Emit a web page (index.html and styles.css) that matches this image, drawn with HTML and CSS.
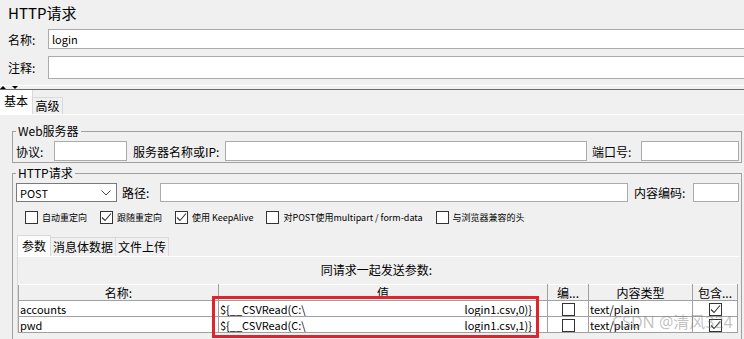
FILE: index.html
```html
<!DOCTYPE html>
<html lang="zh-CN">
  <head>
    <meta charset="UTF-8" />
    <title>HTTP请求</title>
    <link rel="stylesheet" href="styles.css">
  </head>
  <body>
    <div class="title">HTTP请求</div>

    <div class="field-row name-row">
      <label>名称:</label>
      <div class="input wide"><span class="latin">login</span></div>
    </div>
    <div class="field-row comment-row">
      <label>注释:</label>
      <div class="input wide"></div>
    </div>

    <div class="splitter">
      <span class="tri up"></span>
      <span class="tri down"></span>
    </div>

    <div class="tabs top-tabs">
      <div class="tab active">基本</div>
      <div class="tab">高级</div>
    </div>

    <div class="tab-body">
      <fieldset class="group web">
        <legend>Web服务器</legend>
        <div class="line">
          <label class="lbl-proto">协议:</label>
          <div class="input proto"></div>
          <label class="lbl-host">服务器名称或IP:</label>
          <div class="input grow"></div>
          <label class="lbl-port">端口号:</label>
          <div class="input port"></div>
        </div>
      </fieldset>

      <fieldset class="group http">
        <legend>HTTP请求</legend>
        <div class="line">
          <div class="select">
            <span class="latin">POST</span>
            <svg width="10" height="6" viewBox="0 0 10 6"><path d="M0.5 0.5 L5 5 L9.5 0.5" fill="none" stroke="#444" stroke-width="1"/></svg>
          </div>
          <label class="lbl-path">路径:</label>
          <div class="input grow"></div>
          <label class="lbl-enc">内容编码:</label>
          <div class="input enc"></div>
        </div>

        <div class="checks">
          <div class="check"><span class="box"></span>自动重定向</div>
          <div class="check"><span class="box on"><svg width="11" height="11" viewBox="0 0 11 11"><path d="M1 5.5 L4 8.5 L10 1.5" fill="none" stroke="#333" stroke-width="1.1"/></svg></span>跟随重定向</div>
          <div class="check"><span class="box on"><svg width="11" height="11" viewBox="0 0 11 11"><path d="M1 5.5 L4 8.5 L10 1.5" fill="none" stroke="#333" stroke-width="1.1"/></svg></span>使用 KeepAlive</div>
          <div class="check"><span class="box"></span>对POST使用multipart / form-data</div>
          <div class="check"><span class="box"></span>与浏览器兼容的头</div>
        </div>

        <div class="inner">
          <div class="tabs inner-tabs">
            <div class="tab active">参数</div>
            <div class="tab">消息体数据</div>
            <div class="tab">文件上传</div>
          </div>
          <div class="panel">
            <div class="caption">同请求一起发送参数:</div>
            <table class="params">
              <colgroup>
                <col class="c-name"><col class="c-value"><col class="c-enc"><col class="c-type"><col class="c-inc">
              </colgroup>
              <thead>
                <tr><th>名称:</th><th>值</th><th>编...</th><th>内容类型</th><th>包含...</th></tr>
              </thead>
              <tbody>
                <tr>
                  <td>accounts</td>
                  <td><div class="value"><span>${__CSVRead(C:\</span><span>login1.csv,0)}</span></div></td>
                  <td class="mid"><span class="box"></span></td>
                  <td>text/plain</td>
                  <td class="mid"><span class="box on"><svg width="11" height="11" viewBox="0 0 11 11"><path d="M1 5.5 L4 8.5 L10 1.5" fill="none" stroke="#333" stroke-width="1.1"/></svg></span></td>
                </tr>
                <tr>
                  <td>pwd</td>
                  <td><div class="value"><span>${__CSVRead(C:\</span><span>login1.csv,1)}</span></div></td>
                  <td class="mid"><span class="box"></span></td>
                  <td>text/plain</td>
                  <td class="mid"><span class="box on"><svg width="11" height="11" viewBox="0 0 11 11"><path d="M1 5.5 L4 8.5 L10 1.5" fill="none" stroke="#333" stroke-width="1.1"/></svg></span></td>
                </tr>
              </tbody>
            </table>
          </div>
        </div>
      </fieldset>
    </div>

    <!-- annotation overlays from the screenshot -->
    <div class="red-box"></div>
    <div class="watermark">CSDN @清风324</div>
  </body>
</html>
```

FILE: styles.css
```css
* {
  box-sizing: border-box;
}
html,
body {
  height: 100%;
}
body {
  margin: 0;
  background: #f0f0f0;
  color: #000;
  font-family: "Noto Sans CJK SC", "Noto Sans", sans-serif;
  font-size: 12px;
  overflow: hidden;
  position: relative;
}
.latin {
  font-size: 11px;
}
.title {
  height: 29px;
  line-height: 25px;
  padding-left: 8px;
  font-size: 15px;
}
.field-row {
  display: flex;
  align-items: center;
}
.field-row label {
  width: 48px;
  padding-left: 8px;
  flex-shrink: 0;
}
.name-row {
  height: 20px;
  margin-bottom: 7px;
}
.comment-row {
  height: 23px;
}
.input {
  background: #fff;
  border: 1px solid #ababab;
  height: 100%;
  line-height: 18px;
  padding-left: 3px;
}
.wide {
  flex: 1;
  margin-right: -4px;
}
.splitter {
  margin-top: 6px;
  height: 5px;
  border-top: 1px solid #fff;
  border-bottom: 1px solid #6a6a6a;
  display: flex;
  gap: 6px;
}
.tri {
  width: 0;
  height: 0;
  border-left: 3px solid transparent;
  border-right: 3px solid transparent;
}
.tri.up {
  border-bottom: 3px solid #000;
}
.tri.down {
  border-top: 3px solid #000;
}
.tabs {
  display: flex;
  align-items: flex-end;
}
.tab {
  border: 1px solid #d9d9d9;
  border-bottom: none;
  background: #f0f0f0;
  padding: 0;
  text-align: center;
  white-space: nowrap;
}
.tab.active {
  background: #fff;
}
.top-tabs {
  height: 24px;
}
.top-tabs .tab {
  width: 30px;
  height: 17px;
  line-height: 15px;
  border-left: none;
}
.top-tabs .tab.active {
  width: 33px;
  height: 24px;
  line-height: 22px;
  border: none;
  border-right: 1px solid #d9d9d9;
}
.tab-body {
  border-top: 1px solid #fff;
  padding-top: 9px;
}
.group {
  margin: 0 2px 0 12px;
  border: 1px solid #a0a0a0;
  padding: 0 2px 1px 3px;
  min-width: 0;
}
.group legend {
  padding: 0 2px;
  line-height: 14px;
}
.line {
  display: flex;
  align-items: center;
  height: 20px;
  margin-top: 3px;
}
.line .input {
  flex-shrink: 0;
}
.line label {
  flex-shrink: 0;
  white-space: nowrap;
}
.grow {
  flex: 1 !important;
}
.lbl-proto {
  width: 38px;
}
.proto {
  width: 73px;
}
.lbl-host {
  margin-left: 6px;
  width: 92px;
}
.lbl-port {
  margin-left: 5px;
  width: 49px;
}
.port {
  width: 98px;
}
.group.web {
  margin-bottom: 3px;
}
.group.http {
  height: 400px;
}
.http .line {
  height: 19px;
}
.select {
  width: 101px;
  height: 19px;
  background: #fff;
  border: 1px solid #7a7a7a;
  display: flex;
  align-items: center;
  justify-content: space-between;
  padding: 0 5px 0 3px;
  flex-shrink: 0;
}
.lbl-path {
  margin-left: 5px;
  width: 38px;
}
.lbl-enc {
  margin-left: 6px;
  width: 59px;
}
.enc {
  width: 46px;
}
.checks {
  display: flex;
  align-items: center;
  gap: 13px;
  margin: 9px 0 0 9px;
  height: 13px;
  font-size: 9px;
  white-space: nowrap;
}
.check {
  display: flex;
  align-items: center;
  gap: 4px;
}
.box {
  display: inline-flex;
  align-items: center;
  justify-content: center;
  width: 13px;
  height: 13px;
  background: #fff;
  border: 1px solid #333;
}
.inner {
  margin: 11px 0 0 1px;
}
.inner-tabs {
  height: 21px;
}
.inner-tabs .tab {
  height: 19px;
  line-height: 17px;
  border-left: none;
}
.inner-tabs .tab:first-child {
  border-left: 1px solid #d9d9d9;
}
.inner-tabs .tab.active {
  height: 21px;
  line-height: 19px;
  width: 34px;
  background: #fcfcfc;
}
.inner-tabs .tab:nth-child(2) {
  width: 65px;
}
.inner-tabs .tab:nth-child(3) {
  width: 53px;
}
.panel {
  border-left: 1px solid #d9d9d9;
  border-top: 1px solid #fff;
  padding-top: 5px;
}
.caption {
  text-align: center;
  line-height: 16px;
  margin-bottom: 6px;
  padding-right: 4px;
}
.params {
  border-collapse: collapse;
  table-layout: fixed;
  width: 719px;
}
.c-name {
  width: 200px;
}
.c-value {
  width: 329px;
}
.c-enc {
  width: 41px;
}
.c-type {
  width: 104px;
}
.c-inc {
  width: 45px;
}
.params th {
  font-weight: normal;
  height: 16px;
  line-height: 14px;
  padding: 0;
  background: #f0f0f0;
  border: 1px solid #a0a0a0;
  border-top-color: #fff;
  white-space: nowrap;
  overflow: hidden;
}
.params td {
  height: 16px;
  line-height: 14px;
  padding: 0 1px;
  font-size: 11px;
  background: #fff;
  border: 1px solid #a0a0a0;
  white-space: nowrap;
  overflow: hidden;
}
.params td.mid {
  text-align: center;
  padding: 0;
}
.params td.mid .box {
  vertical-align: middle;
  margin-top: -1px;
}
.value {
  display: flex;
  justify-content: space-between;
  padding-right: 14px;
}
.red-box {
  position: absolute;
  left: 212px;
  top: 296px;
  width: 327px;
  height: 42px;
  border: 3px solid #e3232c;
}
.watermark {
  position: absolute;
  left: 612px;
  top: 312px;
  font-size: 16px;
  line-height: 20px;
  color: rgba(120, 120, 120, 0.45);
  font-family: "Noto Sans", "Noto Sans CJK SC", sans-serif;
}
```
